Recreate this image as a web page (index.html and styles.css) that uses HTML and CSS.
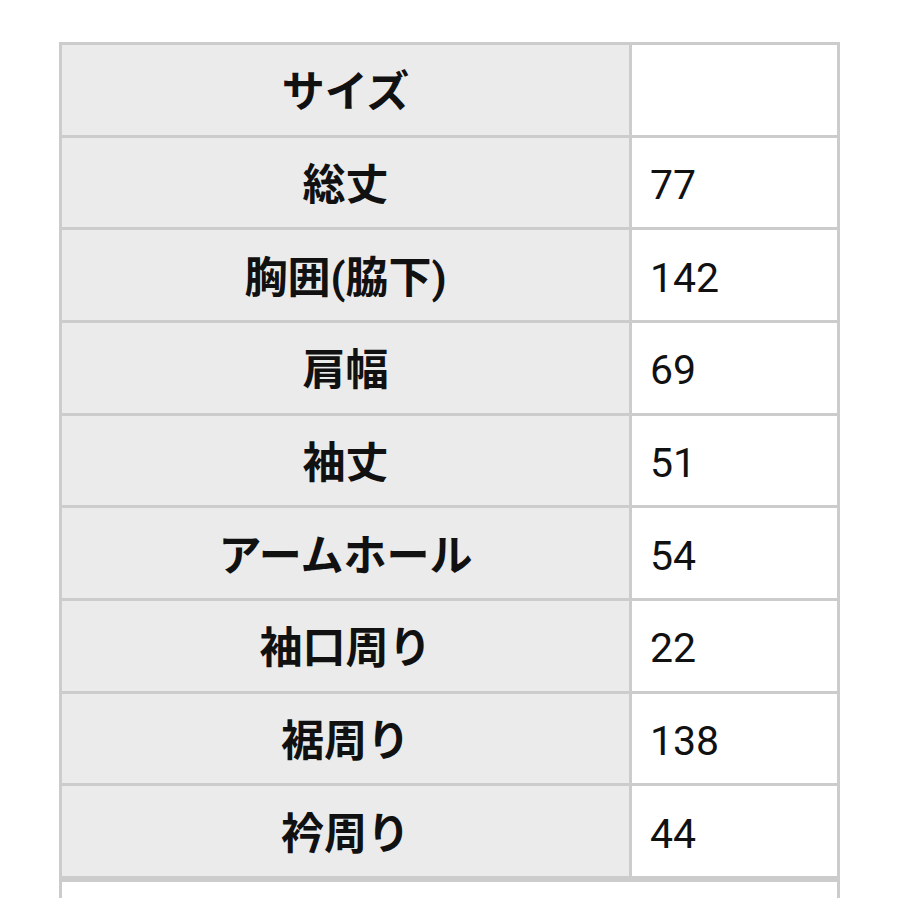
FILE: index.html
```html
<!DOCTYPE html>
<html lang="ja">
<head>
<meta charset="utf-8">
<link rel="stylesheet" href="styles.css">
</head>
<body>
<div class="wrap">
<table class="size-table">
  <tr><th>サイズ</th><td></td></tr>
  <tr><th>総丈</th><td>77</td></tr>
  <tr><th>胸囲(脇下)</th><td>142</td></tr>
  <tr><th>肩幅</th><td>69</td></tr>
  <tr><th>袖丈</th><td>51</td></tr>
  <tr><th>アームホール</th><td>54</td></tr>
  <tr><th>袖口周り</th><td>22</td></tr>
  <tr><th>裾周り</th><td>138</td></tr>
  <tr><th>衿周り</th><td>44</td></tr>
</table>
<table class="next-table">
  <tr><td></td></tr>
</table>
</div>
</body>
</html>
```

FILE: styles.css
```css
html, body {
  margin: 0;
  padding: 0;
  background: #ffffff;
}
body {
  font-family: Roboto, "Noto Sans CJK JP", sans-serif;
  color: #111111;
}
.wrap {
  padding: 42px 0 0 59px;
  height: 900px;
  box-sizing: border-box;
  overflow: hidden;
}
.size-table {
  border-collapse: collapse;
  width: 781px;
  table-layout: fixed;
}
.size-table th,
.size-table td {
  border: 3px solid #cccccc;
  height: 92.67px;
  padding: 0;
  box-sizing: border-box;
  line-height: 1;
}
.size-table th {
  width: 570px;
  background: #ebebeb;
  font-weight: 700;
  font-size: 43px;
  text-align: center;
  padding-top: 6px;
}
.size-table td {
  background: #ffffff;
  font-weight: 400;
  font-size: 41px;
  text-align: left;
  padding-left: 18px;
  padding-top: 6px;
}
.next-table {
  border-collapse: collapse;
  width: 781px;
}
.next-table td {
  border: 3px solid #cccccc;
  border-bottom: none;
  height: 16px;
  padding: 0;
  background: #ffffff;
}
```
